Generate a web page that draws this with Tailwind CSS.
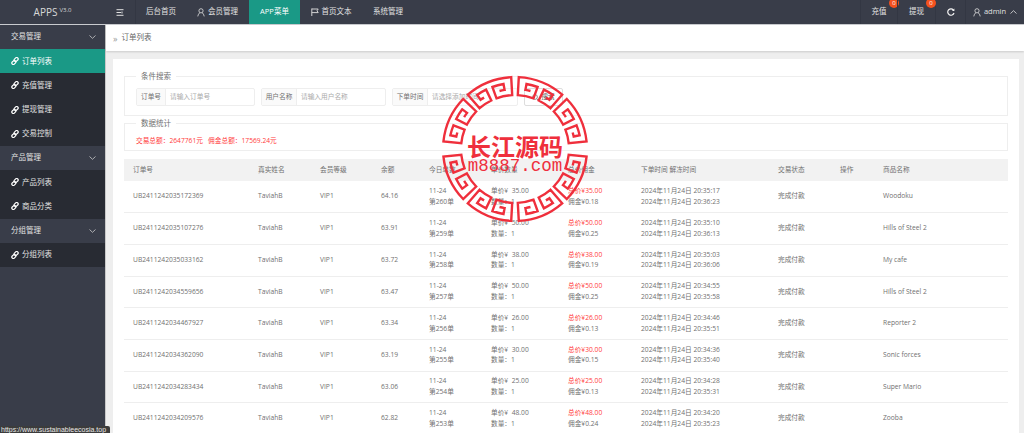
<!DOCTYPE html>
<html lang="zh-CN">
<head>
    <meta charset="UTF-8">
    <meta name="viewport" content="width=device-width, initial-scale=1.0">
    <title>订单列表</title>
    <script src="https://cdn.jsdelivr.net/npm/@tailwindcss/browser@4"></script>
</head>
<body class="relative h-[433px] overflow-hidden bg-[#eeeeee] font-['Open_Sans','Noto_Sans_CJK_SC',sans-serif] text-[6.7px] text-[#707070]">
    <svg class="hidden">
        <defs>
            <g id="icon-link" fill="none" stroke="currentColor" stroke-width="1.5">
                <rect x="0.8" y="5" width="5.6" height="3.6" rx="1.7" transform="rotate(-45 3.6 6.8)"/>
                <rect x="3.6" y="1.4" width="5.6" height="3.6" rx="1.7" transform="rotate(-45 6.4 3.2)"/>
            </g>
            <g id="icon-user" fill="none" stroke="currentColor" stroke-width="0.8">
                <circle cx="4" cy="2.8" r="2.1"/>
                <path d="M0.8 8.4 C1.2 6 2.4 5 3 4.8 M7.2 8.4 C6.8 6 5.6 5 5 4.8"/>
            </g>
            <path id="arc-segment" fill="none" stroke-width="2.4" stroke-linejoin="miter" d="M15.5-58 A60 60 0 0 0 10.4-59.1 L11.5-65 A66 66 0 0 1 22.6-62 L18.5-50.7 A54 54 0 0 0 2.8-53.9 L3.8-71.9 A72 72 0 0 1 47.2-54.3 L35.4-40.8 A54 54 0 0 0 23.7-48.5 L28.9-59.3 A66 66 0 0 1 37.9-54.1 L34.4-49.2 A60 60 0 0 0 30.9-51.4"/>
        </defs>
    </svg>

    <!-- 顶部导航 -->
    <header class="flex h-[25px] border-b border-[#c9cbcf] bg-[#393d49] text-[7.5px] text-[#e2e2e2]">
        <div class="flex w-[105px] items-center justify-center gap-[2px] text-[#d8d8d8]">
            <span class="text-[10px]">APPS</span>
            <span class="mb-[4px] text-[6px]">V3.0</span>
        </div>
        <button class="flex w-[31px] items-center justify-center border-r border-[#333743]">
            <svg class="h-[7px] w-[8px]" viewBox="0 0 8 7" fill="none" stroke="#e2e2e2" stroke-width="1"><path d="M0.5 0.7H7.5M0.5 3.5H5M0.5 6.3H7.5M6 2.5V4.5"/></svg>
        </button>
        <nav class="flex">
            <a class="flex w-[50px] items-center justify-center">后台首页</a>
            <a class="flex w-[63px] items-center justify-center gap-[3px]"><svg class="h-[9px] w-[8px]" viewBox="0 0 8 9"><use href="#icon-user"/></svg>会员管理</a>
            <a class="flex w-[51px] items-center justify-center bg-[#1a9986] text-white">APP菜单</a>
            <a class="flex w-[62px] items-center justify-center gap-[3px]"><svg class="h-[8px] w-[8px]" viewBox="0 0 8 8" fill="none" stroke="#e2e2e2" stroke-width="0.9"><path d="M0.8 0.5V8M0.8 1H7.2L6 2.8L7.2 4.6H0.8"/></svg>首页文本</a>
            <a class="flex w-[52px] items-center justify-center">系统管理</a>
        </nav>
        <div class="ml-auto flex">
            <a class="relative flex w-[37px] items-center justify-center border-l border-[#333743]">充值<span class="absolute right-[-2px] top-[-2px] flex h-[10px] w-[10px] items-center justify-center rounded-full bg-[#f4511e] text-[6px] text-white">0</span></a>
            <a class="relative flex w-[38px] items-center justify-center border-l border-[#333743]">提现<span class="absolute right-[-1px] top-[-2px] flex h-[10px] w-[10px] items-center justify-center rounded-full bg-[#f4511e] text-[6px] text-white">0</span></a>
            <a class="flex w-[30px] items-center justify-center border-l border-[#333743]">
                <svg class="h-[8px] w-[8px]" viewBox="0 0 8 8" fill="none" stroke="#f2f2f2" stroke-width="1.2"><path d="M6.7 2.4A3.2 3.2 0 1 0 7 5"/><path d="M7.4 0.6V3H5Z" fill="#f2f2f2" stroke="none"/></svg>
            </a>
            <a class="flex w-[59px] items-center justify-center gap-[3px] border-l border-[#333743]">
                <svg class="h-[9px] w-[8px]" viewBox="0 0 8 9"><use href="#icon-user"/></svg>admin
                <svg class="ml-[1px] h-[4px] w-[7px]" viewBox="0 0 7 4" fill="none" stroke="#e2e2e2" stroke-width="0.8"><path d="M0.5 3.5L3.5 0.7L6.5 3.5"/></svg>
            </a>
        </div>
    </header>

    <div class="flex h-[408px]">
        <!-- 左侧菜单 -->
        <aside id="sidebar" class="w-[106px] shrink-0 border-r border-[#c8c8c8] bg-[#393d49] text-[7.5px] text-[#e2e2e2]"></aside>

        <main class="min-w-0 flex-1">
            <div class="flex h-[26px] items-center gap-[4px] bg-white pl-[7px] text-[7.5px] text-[#666666] shadow-[0_1px_2px_rgba(0,0,0,0.15)]">
                <span class="text-[9px] leading-none text-[#999999]">»</span>订单列表
            </div>

            <section class="ml-[7px] mt-[8px] h-[374px] w-[906px] overflow-hidden bg-white px-[11px] pt-[13px]">
                <fieldset class="h-[44px] border border-[#eeeeee] px-[11px]">
                    <legend class="px-[5px] text-[7.5px] leading-[8px]">条件搜索</legend>
                    <div class="mt-[8px] flex gap-[6px]">
                        <div class="flex h-[18px] w-[119px] rounded-[2px] border border-[#eeeeee]">
                            <span class="flex w-[29px] items-center justify-center border-r border-[#eeeeee] bg-[#fafafa]">订单号</span>
                            <span class="flex items-center pl-[4px] text-[#aaaaaa]">请输入订单号</span>
                        </div>
                        <div class="flex h-[18px] w-[125px] rounded-[2px] border border-[#eeeeee]">
                            <span class="flex w-[35px] items-center justify-center border-r border-[#eeeeee] bg-[#fafafa]">用户名称</span>
                            <span class="flex items-center pl-[4px] text-[#aaaaaa]">请输入用户名称</span>
                        </div>
                        <div class="flex h-[18px] w-[126px] rounded-[2px] border border-[#eeeeee]">
                            <span class="flex w-[35px] items-center justify-center border-r border-[#eeeeee] bg-[#fafafa]">下单时间</span>
                            <span class="flex items-center pl-[4px] text-[#aaaaaa]">请选择添加时间</span>
                        </div>
                        <button class="flex h-[18px] w-[39px] items-center justify-center gap-[2px] rounded-[2px] border border-[#dddddd] text-[#555555]">
                            <svg class="h-[7px] w-[7px]" viewBox="0 0 7 7" fill="none" stroke="#777777" stroke-width="0.8"><circle cx="3" cy="3" r="2.4"/><path d="M4.8 4.8L6.8 6.8"/></svg>搜索
                        </button>
                    </div>
                </fieldset>

                <fieldset class="mt-[3px] h-[32px] border border-[#eeeeee] px-[11px]">
                    <legend class="px-[5px] text-[7.5px] leading-[8px]">数据统计</legend>
                    <p class="mt-[9px] text-[#ff3b3b]">交易总额：2647761元 &nbsp; 佣金总额：17569.24元</p>
                </fieldset>

                <table class="mt-[8px] w-[884px] table-fixed border-collapse text-left">
                    <thead class="bg-[#f2f2f2]">
                        <tr class="h-[22px]">
                            <th class="w-[125px] pl-[9px] font-normal">订单号</th>
                            <th class="w-[62px] pl-[9px] font-normal">真实姓名</th>
                            <th class="w-[61px] pl-[9px] font-normal">会员等级</th>
                            <th class="w-[48px] pl-[9px] font-normal">余额</th>
                            <th class="w-[62px] pl-[9px] font-normal">今日单数</th>
                            <th class="w-[77px] pl-[9px] font-normal">单价数量</th>
                            <th class="w-[73px] pl-[9px] font-normal">总价佣金</th>
                            <th class="w-[137px] pl-[9px] font-normal">下单时间 解冻时间</th>
                            <th class="w-[62px] pl-[9px] font-normal">交易状态</th>
                            <th class="w-[43px] pl-[9px] font-normal">操作</th>
                            <th class="pl-[9px] font-normal">商品名称</th>
                        </tr>
                    </thead>
                    <tbody id="orders"></tbody>
                </table>
            </section>
        </main>
    </div>

    <!-- 水印 -->
    <svg class="absolute left-[435px] top-[69px] h-[160px] w-[160px]" viewBox="-80 -80 160 160" stroke="#ef2f3c">
        <use href="#arc-segment"/>
        <use href="#arc-segment" transform="rotate(43)"/>
        <use href="#arc-segment" transform="scale(-1 1)"/>
        <use href="#arc-segment" transform="scale(-1 1) rotate(43)"/>
        <use href="#arc-segment" transform="scale(1 -1)"/>
        <use href="#arc-segment" transform="scale(1 -1) rotate(43)"/>
        <use href="#arc-segment" transform="scale(-1 -1)"/>
        <use href="#arc-segment" transform="scale(-1 -1) rotate(43)"/>
        <text x="0" y="7" text-anchor="middle" fill="#ef2f3c" stroke="none" font-size="24" font-weight="700" font-family="'Noto Sans CJK SC',sans-serif">长江源码</text>
        <text x="0" y="22" text-anchor="middle" fill="#ef2f3c" stroke="none" font-size="17.5" font-family="'Liberation Mono',monospace">m8887.com</text>
    </svg>

    <div class="absolute bottom-0 left-0 h-[7px] w-[110px] overflow-hidden rounded-tr-[2px] bg-[#3c3c3c] pl-[1px] font-['Liberation_Sans',sans-serif] text-[7px] leading-[7px] text-[#e8e8e8]">https://www.sustainableecosia.top</div>

    <script>
        const menu = [
            ['交易管理', ['订单列表', '充值管理', '提现管理', '交易控制']],
            ['产品管理', ['产品列表', '商品分类']],
            ['分组管理', ['分组列表']],
        ];
        let sidebarHtml = '';
        menu.forEach(([group, items]) => {
            sidebarHtml += `<div class="flex h-[24.2px] items-center justify-between pl-[11px] pr-[9px]">${group}
                <svg class="h-[4px] w-[7px]" viewBox="0 0 7 4" fill="none" stroke="#cccccc" stroke-width="0.8"><path d="M0.5 0.5L3.5 3.3L6.5 0.5"/></svg></div>`;
            items.forEach(item => {
                const bg = item === '订单列表' ? 'bg-[#1a9986] text-white' : 'bg-[#282b33]';
                sidebarHtml += `<div class="flex h-[24.2px] items-center gap-[3px] pl-[11px] ${bg}">
                    <svg class="h-[8px] w-[8px] text-white" viewBox="0 0 10 10"><use href="#icon-link"/></svg>${item}</div>`;
            });
        });
        document.getElementById('sidebar').innerHTML = sidebarHtml;

        const orders = [
            ['UB2411242035172369', '64.16', '260', '35.00', '0.18', '20:35:17', '20:36:23', 'Woodoku'],
            ['UB2411242035107276', '63.91', '259', '50.00', '0.25', '20:35:10', '20:36:13', 'Hills of Steel 2'],
            ['UB2411242035033162', '63.72', '258', '38.00', '0.19', '20:35:03', '20:36:06', 'My cafe'],
            ['UB2411242034559656', '63.47', '257', '50.00', '0.25', '20:34:55', '20:35:58', 'Hills of Steel 2'],
            ['UB2411242034467927', '63.34', '256', '26.00', '0.13', '20:34:46', '20:35:51', 'Reporter 2'],
            ['UB2411242034362090', '63.19', '255', '30.00', '0.15', '20:34:36', '20:35:40', 'Sonic forces'],
            ['UB2411242034283434', '63.06', '254', '25.00', '0.13', '20:34:28', '20:35:31', 'Super Mario'],
            ['UB2411242034209576', '62.82', '253', '48.00', '0.24', '20:34:20', '20:35:23', 'Zooba'],
        ];
        document.getElementById('orders').innerHTML = orders.map(o => `
            <tr class="h-[31.7px] border-b border-[#eeeeee] leading-[10.6px]">
                <td class="pl-[9px]">${o[0]}</td>
                <td class="pl-[9px]">TaviahB</td>
                <td class="pl-[9px]">VIP1</td>
                <td class="pl-[9px]">${o[1]}</td>
                <td class="pl-[9px]">11-24<br>第${o[2]}单</td>
                <td class="pl-[9px]">单价¥&nbsp; ${o[3]}<br>数量：1</td>
                <td class="pl-[9px]"><span class="text-[#ff3b3b]">总价¥${o[3]}</span><br>佣金¥${o[4]}</td>
                <td class="pl-[9px]">2024年11月24日 ${o[5]}<br>2024年11月24日 ${o[6]}</td>
                <td class="pl-[9px]">完成付款</td>
                <td class="pl-[9px]"></td>
                <td class="pl-[9px]">${o[7]}</td>
            </tr>`).join('');
    </script>
</body>
</html>
